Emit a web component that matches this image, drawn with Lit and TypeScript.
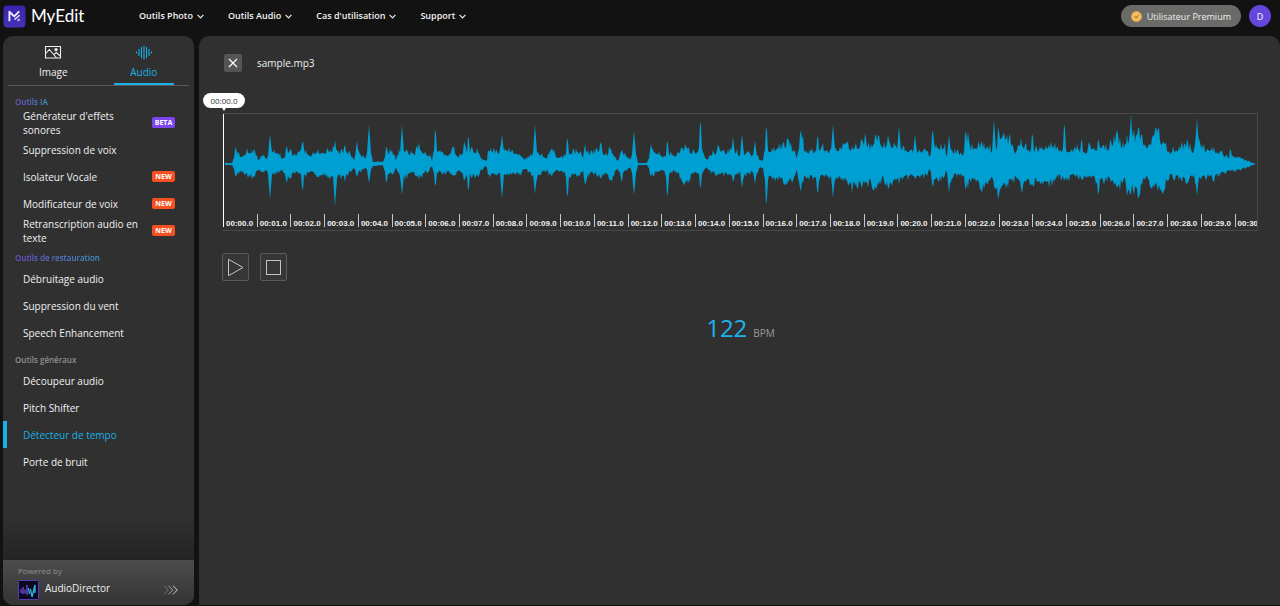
import { LitElement, html, svg, css, nothing } from "lit";
import { customElement, property, state } from "lit/decorators.js";
import { classMap } from "lit/directives/class-map.js";
import { styleMap } from "lit/directives/style-map.js";

interface Tool { name: string; badge?: "BETA" | "NEW"; active?: boolean }
interface ToolGroup { title: string; plain?: boolean; tools: Tool[] }

const NAV = ["Outils Photo", "Outils Audio", "Cas d'utilisation", "Support"];

const GROUPS: ToolGroup[] = [
  {
    title: "Outils IA",
    tools: [
      { name: "Générateur d'effets sonores", badge: "BETA" },
      { name: "Suppression de voix" },
      { name: "Isolateur Vocale", badge: "NEW" },
      { name: "Modificateur de voix", badge: "NEW" },
      { name: "Retranscription audio en texte", badge: "NEW" },
    ],
  },
  {
    title: "Outils de restauration",
    tools: [
      { name: "Débruitage audio" },
      { name: "Suppression du vent" },
      { name: "Speech Enhancement" },
    ],
  },
  {
    title: "Outils généraux",
    plain: true,
    tools: [
      { name: "Découpeur audio" },
      { name: "Pitch Shifter" },
      { name: "Détecteur de tempo", active: true },
      { name: "Porte de bruit" },
    ],
  },
];

/* Length of the clip on the horizontal axis, and one second on the same axis. */
const SPAN = 3102;
const SECOND = 101.2;
const MIDDLE = 50;

/* Loudness body: position, height above the axis, depth below it. */
const BODY: number[][] = [
  [0, 1, 1], [34, 1, 1], [38, 14, 12], [50, 8, 8], [75, 12, 11], [94, 13, 13], [106, 4, 4], [121, 11, 8],
  [131, 5, 5], [146, 13, 11], [171, 8, 8], [181, 5, 6], [191, 12, 14], [216, 9, 8], [239, 15, 12], [261, 8, 8],
  [276, 12, 10], [306, 12, 11], [326, 14, 12], [346, 12, 12], [366, 13, 14], [381, 11, 8], [393, 5, 4],
  [402, 14, 10], [421, 7, 5], [446, 2, 2], [484, 2, 1], [490, 12, 12], [514, 11, 8], [519, 4, 4], [526, 11, 11],
  [546, 13, 12], [571, 10, 9], [588, 16, 12], [599, 13, 11], [621, 8, 5], [628, 2, 2], [632, 1, 1], [646, 12, 8],
  [676, 9, 8], [691, 15, 11], [706, 7, 6], [721, 12, 9], [746, 14, 12], [766, 12, 12], [776, 6, 5], [791, 2, 2],
  [797, 14, 12], [821, 12, 10], [846, 15, 12], [861, 12, 11], [891, 11, 10], [903, 5, 5], [909, 5, 5],
  [918, 8, 8], [946, 12, 12], [961, 8, 8], [971, 6, 6], [986, 15, 12], [1001, 7, 7], [1026, 8, 8],
  [1043, 12, 11], [1076, 12, 9], [1079, 3, 3], [1086, 16, 16], [1101, 10, 8], [1133, 15, 13], [1146, 10, 10],
  [1166, 12, 13], [1186, 3, 4], [1196, 13, 12], [1211, 8, 6], [1226, 2, 3], [1240, 1, 1], [1279, 1, 1],
  [1283, 15, 11], [1311, 10, 8], [1326, 6, 6], [1346, 10, 9], [1356, 8, 7], [1386, 16, 17], [1421, 10, 8],
  [1441, 12, 8], [1451, 3, 3], [1459, 8, 7], [1486, 14, 11], [1511, 12, 10], [1530, 16, 14], [1546, 10, 10],
  [1554, 3, 3], [1560, 12, 12], [1586, 9, 8], [1596, 14, 12], [1611, 4, 4], [1621, 4, 4], [1630, 14, 14],
  [1671, 17, 14], [1691, 20, 20], [1716, 12, 12], [1721, 6, 6], [1733, 22, 20], [1746, 14, 14], [1776, 12, 13],
  [1784, 19, 20], [1796, 15, 12], [1821, 12, 13], [1831, 20, 22], [1841, 15, 15], [1861, 18, 15],
  [1881, 17, 22], [1916, 20, 21], [1941, 17, 18], [1958, 25, 26], [1981, 17, 14], [1996, 24, 24],
  [2016, 16, 18], [2028, 18, 14], [2041, 15, 14], [2061, 14, 12], [2091, 13, 15], [2116, 12, 8], [2121, 5, 5],
  [2130, 20, 20], [2166, 16, 10], [2172, 5, 5], [2178, 16, 18], [2191, 13, 12], [2221, 8, 10], [2231, 24, 22],
  [2246, 16, 14], [2276, 19, 24], [2301, 16, 18], [2307, 10, 15], [2321, 16, 23], [2341, 25, 23],
  [2361, 24, 18], [2376, 12, 14], [2394, 22, 23], [2416, 13, 16], [2441, 14, 18], [2471, 18, 22],
  [2501, 17, 13], [2516, 13, 13], [2536, 14, 14], [2561, 15, 12], [2591, 13, 12], [2606, 18, 14],
  [2621, 16, 16], [2636, 20, 17], [2656, 15, 15], [2681, 28, 25], [2701, 17, 16], [2724, 25, 24],
  [2746, 29, 30], [2761, 24, 18], [2776, 15, 13], [2786, 24, 22], [2801, 30, 24], [2821, 21, 23],
  [2841, 12, 12], [2876, 18, 15], [2896, 18, 17], [2911, 13, 12], [2922, 19, 18], [2951, 14, 12],
  [2976, 13, 13], [2996, 11, 9], [3011, 7, 7], [3041, 7, 6], [3066, 4, 4], [3099, 0, 0], [3102, 0, 0],
];

/* Drum hits that stand out of the body. */
const HITS: number[][] = [
  [38, 19, 14], [72, 16, 8], [94, 17, 15], [141, 30, 35], [191, 20, 21], [203, 17, 17], [239, 26, 30],
  [336, 24, 42], [366, 19, 17], [402, 23, 13], [438, 39, 19], [490, 19, 21], [537, 39, 31], [588, 22, 16],
  [637, 39, 25], [691, 19, 13], [724, 25, 19], [736, 31, 30], [766, 13, 15], [837, 30, 34], [936, 39, 30],
  [986, 18, 14], [1033, 29, 37], [1086, 20, 21], [1133, 25, 17], [1159, 20, 12], [1166, 12, 20], [1196, 16, 20],
  [1233, 33, 31], [1283, 18, 13], [1333, 26, 36], [1386, 20, 19], [1432, 48, 27], [1486, 22, 12],
  [1530, 27, 18], [1557, 30, 24], [1596, 23, 20], [1630, 42, 45], [1691, 22, 24], [1733, 38, 31],
  [1739, 32, 22], [1784, 32, 33], [1799, 23, 12], [1830, 40, 34], [1861, 24, 16], [1916, 28, 27],
  [1927, 34, 22], [1958, 34, 28], [1996, 30, 28], [2028, 38, 20], [2076, 30, 15], [2129, 38, 26],
  [2178, 29, 29], [2228, 37, 29], [2235, 32, 16], [2276, 26, 33], [2313, 44, 22], [2326, 41, 40],
  [2341, 32, 24], [2351, 32, 18], [2394, 26, 24], [2428, 34, 22], [2524, 45, 19], [2576, 28, 18],
  [2599, 25, 14], [2626, 28, 35], [2681, 38, 27], [2712, 30, 32], [2724, 50, 30], [2746, 35, 35],
  [2756, 34, 20], [2801, 34, 24], [2821, 26, 34], [2876, 24, 20], [2893, 28, 18], [2922, 46, 32],
  [2973, 17, 18], [3022, 17, 8],
];

const grain = (n: number) => {
  const v = Math.sin(n * 12.9898) * 43758.5453;
  return v - Math.floor(v);
};

function level(x: number, side: 1 | 2): number {
  let i = 1;
  while (i < BODY.length - 1 && BODY[i][0] < x) i++;
  const a = BODY[i - 1];
  const b = BODY[i];
  const t = (x - a[0]) / (b[0] - a[0]);
  const rough = grain(x + side * 7);
  let value = (a[side] + (b[side] - a[side]) * t) * (0.8 + 0.55 * rough * rough);
  for (const hit of HITS) {
    const d = Math.abs(x - hit[0]);
    if (d < 4) value = Math.max(value, hit[side] * (1 - d / 9));
    else if (d < 10) value = Math.max(value, hit[side] * 0.5 * (1 - d / 14));
  }
  return value;
}

function wavePath(): string {
  const top: string[] = [];
  const bottom: string[] = [];
  for (let x = 6; x <= SPAN; x += 3) {
    top.push(`${x} ${(MIDDLE - level(x, 1)).toFixed(1)}`);
    bottom.unshift(`${x} ${(MIDDLE + level(x, 2)).toFixed(1)}`);
  }
  return `M${top.join("L")}L${bottom.join("L")}Z`;
}

const WAVE = wavePath();
const FONT = css`"Open Sans", "Noto Sans", sans-serif`;

@customElement("top-bar")
class TopBar extends LitElement {
  static styles = css`
    :host { display: block; font-family: ${FONT}; }
    header { display: flex; align-items: center; height: 32px; padding: 0 9px 0 3px; }
    button { font: inherit; color: inherit; background: none; border: 0; padding: 0; cursor: pointer; }
    .brand { display: flex; align-items: center; gap: 5px; width: 136px; color: #fff; text-decoration: none; }
    .brand svg { width: 23px; height: 23px; }
    .word { font: 17px/24px Lato, "Open Sans", sans-serif; }
    nav { display: flex; gap: 24px; flex: 1; }
    .item { display: flex; align-items: center; gap: 4px; color: #f2f2f2; font-size: 9px; line-height: 16px; font-weight: 600; white-space: nowrap; }
    .item svg { width: 7px; height: 5px; }
    .premium { display: flex; align-items: center; gap: 5px; height: 22px; padding: 0 10px; border-radius: 11px; background: #6a6a69; color: #eee; font-size: 9px; font-weight: 400; white-space: nowrap; }
    .premium svg { width: 11px; height: 11px; }
    .avatar { width: 22px; height: 22px; margin-left: 8px; border-radius: 50%; background: #6547dc; color: #fff; font-size: 9px; }
  `;

  render() {
    return html`<header>
      <a class="brand" href="#" aria-label="MyEdit">
        <svg viewBox="0 0 23 23" aria-hidden="true">
          <defs><linearGradient id="g" x1="0" y1="0" x2="0" y2="1"><stop offset="0" stop-color="#3a23ac"/><stop offset="1" stop-color="#4433b4"/></linearGradient></defs>
          <rect x="0.5" y="0.5" width="22" height="22" rx="4" fill="url(#g)"/>
          <path d="M6.400 16.200V6.800l4.800 4.600L16.200 6.400" fill="none" stroke="#eeecff" stroke-width="1.900" stroke-linejoin="round"/>
          <path d="M12 14.200l4.200-3.600M15.200 15.400l1-0.800" stroke="#cfc8ff" stroke-width="1.700" stroke-linecap="round"/>
        </svg>
        <span class="word">MyEdit</span>
      </a>
      <nav>
        ${NAV.map((name) => html`<button class="item">${name}
          <svg viewBox="0 0 7 5" aria-hidden="true"><path d="M0.6 0.9l2.9 2.9 2.9-2.9" fill="none" stroke="#eee" stroke-width="1.2"/></svg>
        </button>`)}
      </nav>
      <button class="premium">
        <svg viewBox="0 0 11 11" aria-hidden="true"><circle cx="5.5" cy="5.5" r="5.4" fill="#efb04e"/><circle cx="5.5" cy="5.5" r="3.6" fill="#f5bf66"/><path d="M3.6 5.4l1.5 1.5 2.4-2.6" fill="none" stroke="#76501c" stroke-width="1"/></svg>
        Utilisateur Premium
      </button>
      <button class="avatar" aria-label="Compte">D</button>
    </header>`;
  }
}

@customElement("tool-sidebar")
class ToolSidebar extends LitElement {
  static styles = css`
    :host { display: flex; flex-direction: column; border-radius: 10px; background: #303030; overflow: hidden; font-family: ${FONT}; color: #f0f0f0; }
    a { color: inherit; text-decoration: none; }
    .tabs { display: flex; margin: 0 5px; border-bottom: 1px solid #5a5a5a; }
    .tab { flex: 1; display: flex; flex-direction: column; align-items: center; height: 49px; padding: 9px 0 0; border: 0; background: none; color: inherit; font: 10px/18px ${FONT}; box-sizing: border-box; cursor: pointer; }
    .tab svg { width: 18px; height: 15px; margin-bottom: 3px; }
    .tab::after { content: ""; width: 60px; height: 2px; margin-top: 2px; }
    .on { color: #18b0e6; }
    .on::after { background: #18b0e6; }
    .groups { flex: 1; padding: 9px 0 12px; background: linear-gradient(to bottom, #303030 calc(100% - 40px), #232323); }
    .group + .group { padding-top: 7px; }
    h2 { width: fit-content; margin: 0 0 0 12px; font-size: 8px; line-height: 14px; font-weight: 600; color: transparent; background: linear-gradient(90deg, #7052d8, #3d9bd0); background-clip: text; -webkit-background-clip: text; }
    .plain h2 { color: #909090; background: none; }
    ul { list-style: none; margin: 0; padding: 0; }
    .tool { display: flex; align-items: center; justify-content: space-between; height: 27px; padding: 0 19px 0 16px; border-left: 4px solid transparent; font-size: 10px; line-height: 14px; }
    .name { max-width: 120px; }
    .active { border-left-color: #18b0e6; color: #18b0e6; }
    .badge { flex: none; width: 23px; border-radius: 2px; background: #f5501f; color: #fff; font-size: 7px; line-height: 11px; font-weight: 700; text-align: center; }
    .beta { background: #7c45f0; }
    .powered { display: flex; flex-direction: column; gap: 2px; padding: 5px 15px 4px; background: linear-gradient(#4c4c4c, #343434); }
    .by { font-size: 8px; line-height: 12px; color: #8f8f8f; }
    .product { display: flex; align-items: center; gap: 6px; font-size: 10px; line-height: 18px; }
    .product span { flex: 1; padding-bottom: 4px; }
    .product svg { flex: none; }
  `;

  @state() private tab = "Audio";

  render() {
    return html`
      <div class="tabs" role="tablist">
        ${this.tabButton("Image", svg`<path d="M1.500 1.500h15v11.500h-15zM1.800 8.500l3.500-4 7 8M9.800 9.500l2.500-2 4 3.500" fill="none" stroke="currentColor" stroke-width="1.100"/><circle cx="12" cy="4.600" r="1.700" fill="currentColor"/>`)}
        ${this.tabButton("Audio", svg`<path d="M1.500 6.500v2M4 4v7M6.500 2v11M9 0.500v14M11.500 2v11M14 4v7M16.500 6.500v2" stroke="currentColor" stroke-width="1.100"/>`)}
      </div>
      <div class="groups">
        ${GROUPS.map((group) => html`<section class=${classMap({ group: true, plain: !!group.plain })}>
          <h2>${group.title}</h2>
          <ul>${group.tools.map((tool) => html`<li>
            <a href="#" class=${classMap({ tool: true, active: !!tool.active })}>
              <span class="name">${tool.name}</span>
              ${tool.badge ? html`<span class=${classMap({ badge: true, beta: tool.badge === "BETA" })}>${tool.badge}</span>` : nothing}
            </a>
          </li>`)}</ul>
        </section>`)}
      </div>
      <a class="powered" href="#">
        <div class="by">Powered by</div>
        <div class="product">
          <svg width="21" height="20" viewBox="0 0 21 20" aria-hidden="true">
            <rect x="0.5" y="0.5" width="20" height="19" rx="1" fill="#0b0922" stroke="#5a3db0"/>
            <path d="M3 9v4M5 7v7M7 9.500v4M9 5v10" stroke="#7a55e8" stroke-width="1.200"/>
            <path d="M10.500 8l1 6M12.500 9l1.500 8 3-12v8" fill="none" stroke="#35b8e0" stroke-width="1.300"/>
          </svg>
          <span>AudioDirector</span>
          <svg width="16" height="10" viewBox="0 0 16 10" fill="none" aria-hidden="true">
            <path d="M1 0.700l4.300 4.300L1 9.300" stroke="#777"/><path d="M5.500 0.700l4.300 4.300-4.300 4.300" stroke="#a5a5a5"/><path d="M10 0.700l4.300 4.300L10 9.300" stroke="#d0d0d0"/>
          </svg>
        </div>
      </a>`;
  }

  private tabButton(name: string, icon: unknown) {
    const on = this.tab === name;
    return html`<button role="tab" aria-selected=${on} class=${classMap({ tab: true, on })} @click=${() => (this.tab = name)}>
      <svg viewBox="0 0 18 15" aria-hidden="true">${icon}</svg>${name}
    </button>`;
  }
}

@customElement("wave-view")
class WaveView extends LitElement {
  static styles = css`
    :host { display: block; position: relative; border: solid #484848; border-width: 1px 1px 1px 0; }
    .wave { display: block; width: 100%; height: 100px; }
    .ruler { display: flex; height: 13px; margin-bottom: 3px; overflow: hidden; color: #f0f0f0; font: bold 8px/14px "Liberation Sans", Arial, sans-serif; }
    .second { flex: none; box-sizing: border-box; padding: 3px 0 0 2px; border-left: 1px solid #c8c8c8; white-space: nowrap; }
    .second:last-child { flex: 1; }
    .head { position: absolute; left: 0; top: 0; width: 1px; height: 113px; background: #fff; }
    .time { position: absolute; left: -20px; top: -21px; width: 42px; border-radius: 8px; background: #fff; color: #333; font: 8px/15px ${FONT}; text-align: center; }
    .time::after { content: ""; position: absolute; left: 19px; top: 15px; border: 2px solid transparent; border-top: 3px solid #fff; }
  `;

  @property({ type: Number }) seconds = 30;

  render() {
    return html`
      <svg class="wave" viewBox="0 0 ${SPAN} 100" preserveAspectRatio="none" role="img" aria-label="Forme d'onde">
        <path d=${WAVE} fill="#009fd2"/>
      </svg>
      <div class="ruler">
        ${Array.from({ length: this.seconds }, (_, s) => html`<div class="second" style=${styleMap({ width: `${(SECOND / SPAN) * 100}%` })}>00:${String(s).padStart(2, "0")}.0</div>`)}
        <div class="second">00:${this.seconds}</div>
      </div>
      <div class="head"></div>
      <div class="time">00:00.0</div>`;
  }
}

@customElement("app-root")
class AppRoot extends LitElement {
  static styles = css`
    :host { display: flex; flex-direction: column; min-height: 100vh; box-sizing: border-box; background: #121212; font-family: ${FONT}; color: #f0f0f0; }
    .body { flex: 1; display: flex; gap: 5px; padding: 4px 0 1px 3px; }
    tool-sidebar { flex: none; width: 191px; }
    main { flex: 1; min-width: 0; padding: 18px 22px 24px 24px; border-radius: 10px 10px 0 0; background: #303030; box-sizing: border-box; }
    button { display: grid; place-items: center; padding: 0; box-sizing: border-box; cursor: pointer; }
    .file { display: flex; align-items: center; gap: 15px; margin-bottom: 41px; padding-left: 1px; font-size: 10px; line-height: 18px; }
    .close { width: 18px; height: 18px; border: 0; border-radius: 2px; background: #555; }
    .controls { display: flex; gap: 11px; margin: 22px 0 0 -1px; }
    .control { width: 27px; height: 28px; border: 1px solid #5a5a5a; border-radius: 2px; background: #363636; }
    .tempo { display: flex; align-items: baseline; justify-content: center; gap: 6px; margin-top: 31px; color: #9a9a9a; font-size: 10px; line-height: 32px; }
    .value { color: #1cb4ee; font-size: 24px; }
  `;

  render() {
    return html`
      <top-bar></top-bar>
      <div class="body">
        <tool-sidebar></tool-sidebar>
        <main>
          <div class="file">
            <button class="close" aria-label="Fermer"><svg width="10" height="10" viewBox="0 0 10 10"><path d="M1 1l8 8M9 1l-8 8" stroke="#fff" stroke-width="1.200"/></svg></button>
            <span>sample.mp3</span>
          </div>
          <wave-view></wave-view>
          <div class="controls">
            <button class="control" aria-label="Lecture"><svg width="17" height="19" viewBox="0 0 17 19"><path d="M1.500 1.300v16.400L16 9.500z" fill="none" stroke="#c4c4c4"/></svg></button>
            <button class="control" aria-label="Arrêt"><svg width="15" height="15" viewBox="0 0 15 15"><rect x="0.500" y="0.500" width="14" height="14" fill="none" stroke="#c4c4c4"/></svg></button>
          </div>
          <div class="tempo"><span class="value">122</span><span>BPM</span></div>
        </main>
      </div>`;
  }
}
